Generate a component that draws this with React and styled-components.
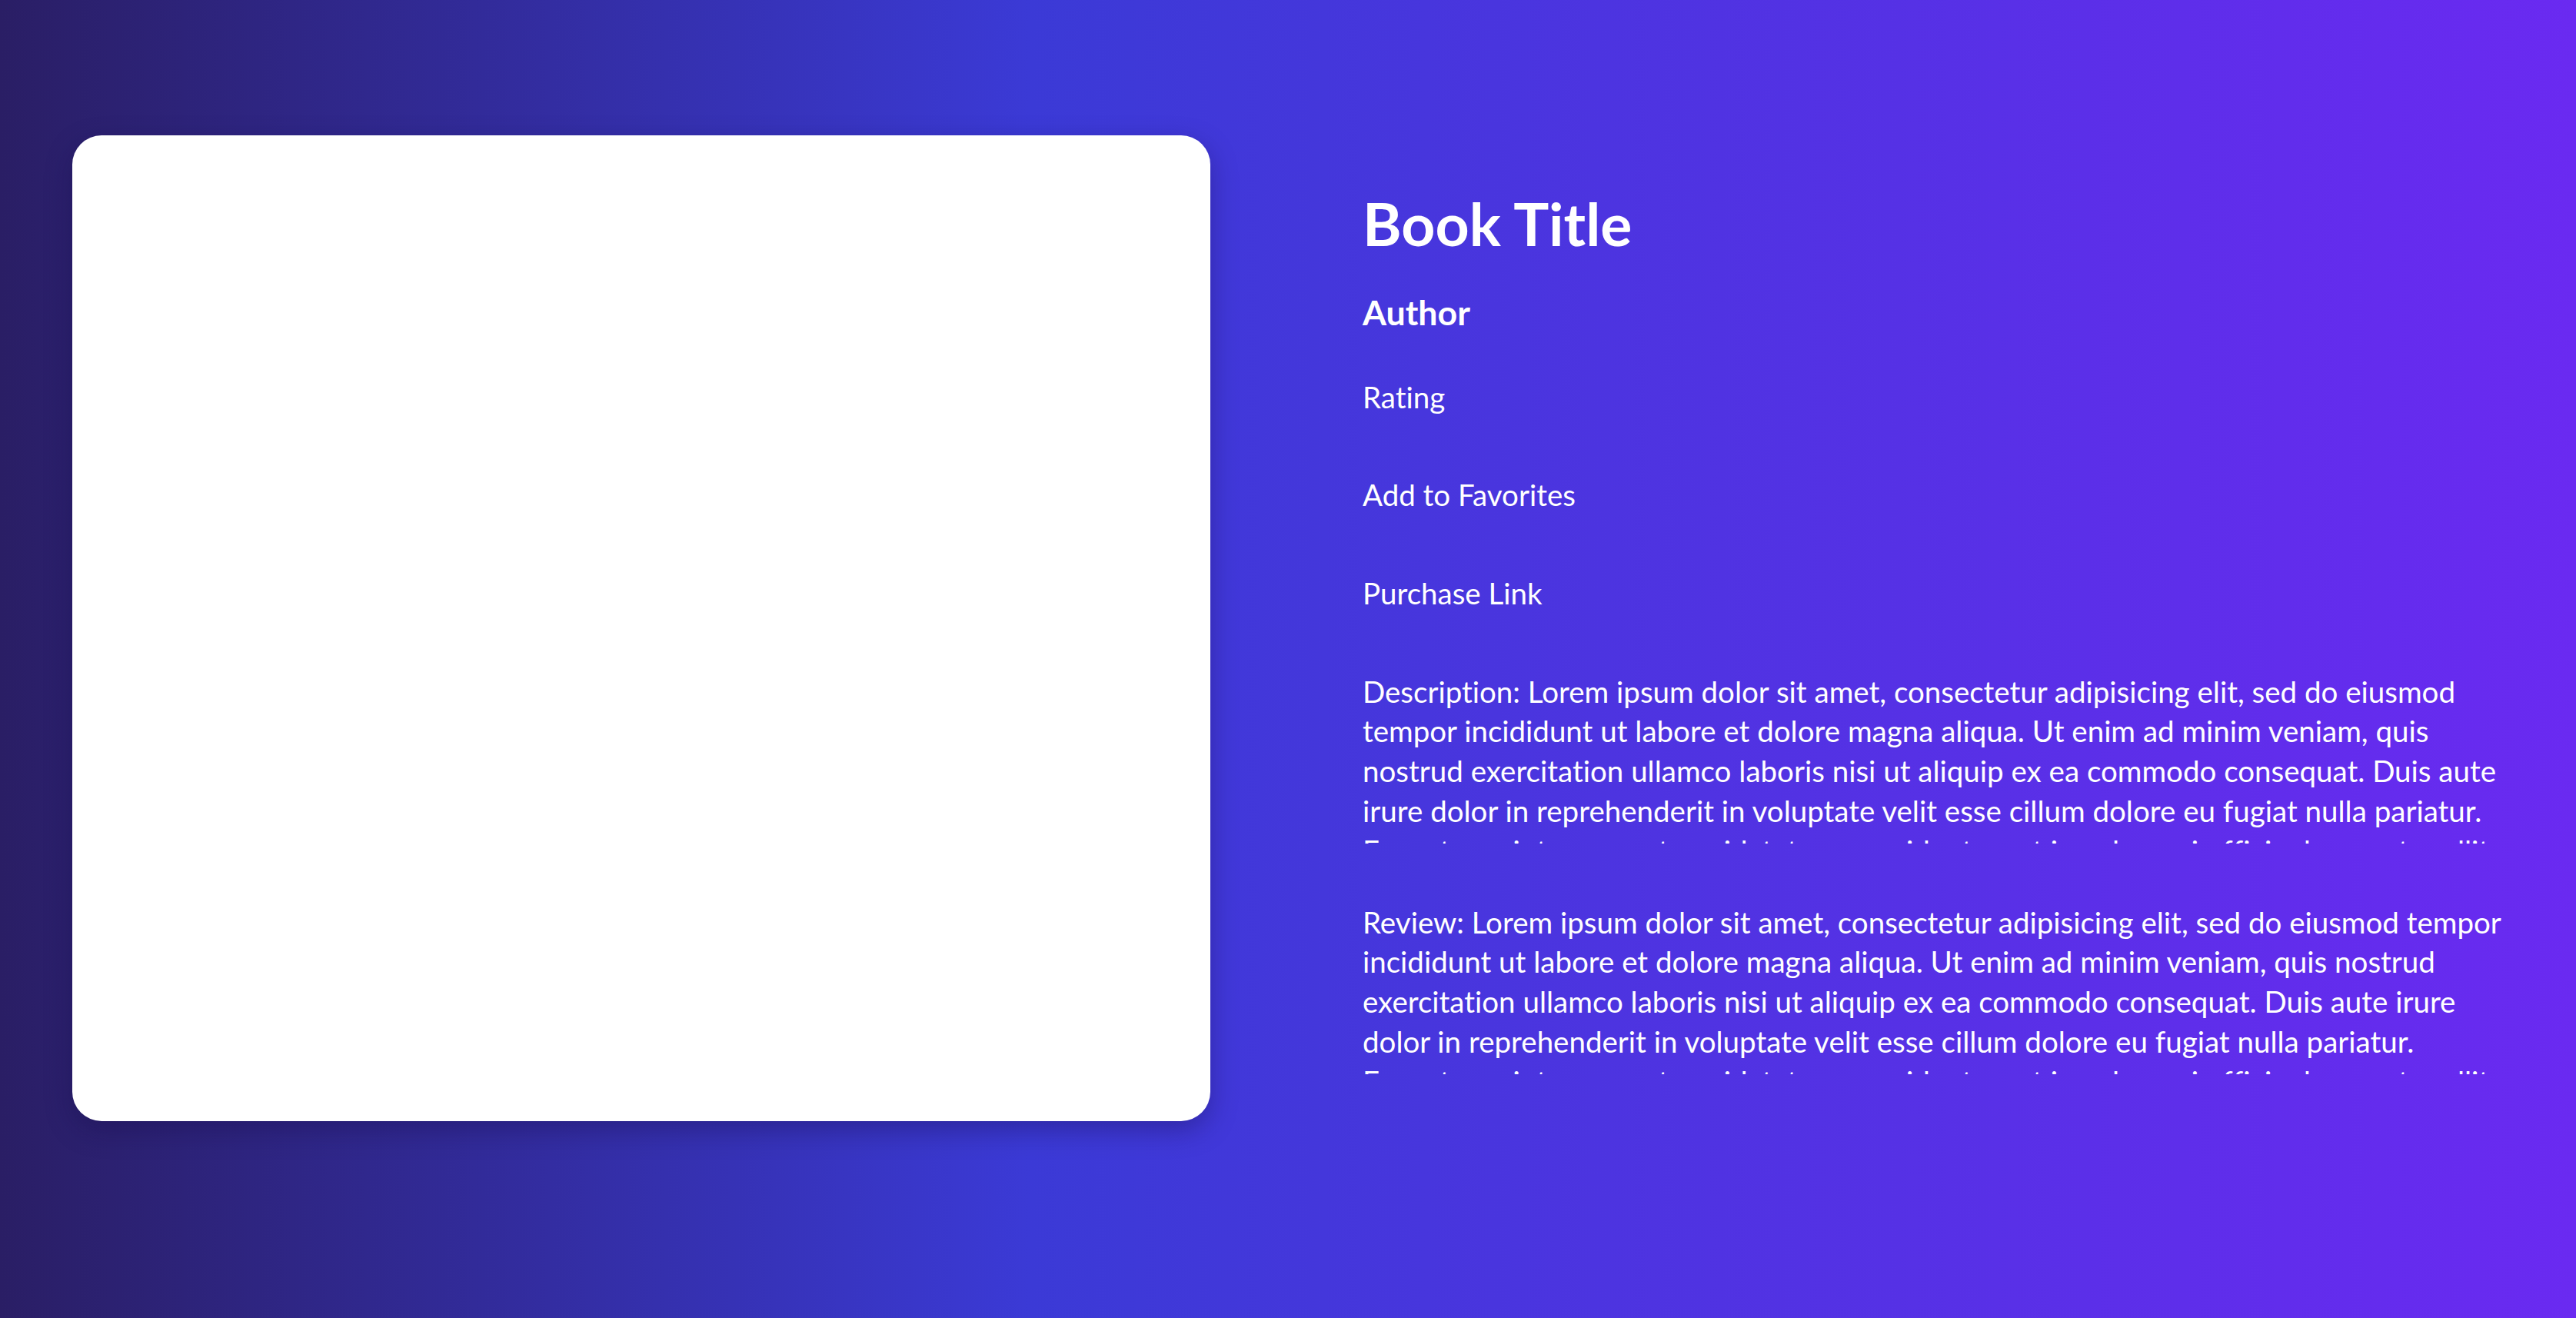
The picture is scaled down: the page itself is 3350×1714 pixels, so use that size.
import React from "react";
import styled, { createGlobalStyle } from "styled-components";

const GlobalStyle = createGlobalStyle`
  html, body {
    margin: 0;
    padding: 0;
  }
  body {
    font-family: Lato, "Open Sans", sans-serif;
    font-variant-ligatures: none;
    font-feature-settings: "liga" 0;
  }
  * {
    box-sizing: border-box;
  }
`;

const Page = styled.main`
  min-height: 100vh;
  padding: 176px 94px 0;
  display: grid;
  grid-template-columns: 1480px 1fr;
  column-gap: 198px;
  align-items: start;
  background: linear-gradient(
    90deg,
    #2a1e65 0%,
    #3b3ad6 40%,
    #6a2af1 100%
  );
`;

const Cover = styled.div`
  height: 1282px;
  background: #fff;
  border-radius: 38px;
  box-shadow: 0 12px 34px rgba(20, 12, 70, 0.35);
`;

const Details = styled.section`
  padding-top: 66px;
  display: flex;
  flex-direction: column;
  color: #fff;
`;

const Title = styled.h1`
  margin: 0;
  font-size: 77px;
  font-weight: 700;
  line-height: 96px;
`;

const Author = styled.h2`
  margin: 42px 0 0;
  font-size: 44.7px;
  font-weight: 700;
  line-height: 1.2;
`;

const Field = styled.p`
  margin: ${(p) => p.$gap || 76}px 0 0;
  font-size: 38.5px;
  font-weight: 400;
  line-height: 51.7px;
  max-height: ${(p) => (p.$clamp ? "223px" : "none")};
  overflow: hidden;
`;

const lorem =
  "Lorem ipsum dolor sit amet, consectetur adipisicing elit, sed do eiusmod tempor incididunt ut labore et dolore magna aliqua. Ut enim ad minim veniam, quis nostrud exercitation ullamco laboris nisi ut aliquip ex ea commodo consequat. Duis aute irure dolor in reprehenderit in voluptate velit esse cillum dolore eu fugiat nulla pariatur. Excepteur sint occaecat cupidatat non proident, sunt in culpa qui officia deserunt mollit anim id est laborum.";

export default function App() {
  return (
    <>
      <GlobalStyle />
      <Page>
        <Cover />
        <Details>
          <Title>Book Title</Title>
          <Author>Author</Author>
          <Field $gap={57}>Rating</Field>
          <Field>Add to Favorites</Field>
          <Field>Purchase Link</Field>
          <Field $clamp>Description: {lorem}</Field>
          <Field $gap={77} $clamp>
            Review: {lorem}
          </Field>
        </Details>
      </Page>
    </>
  );
}
